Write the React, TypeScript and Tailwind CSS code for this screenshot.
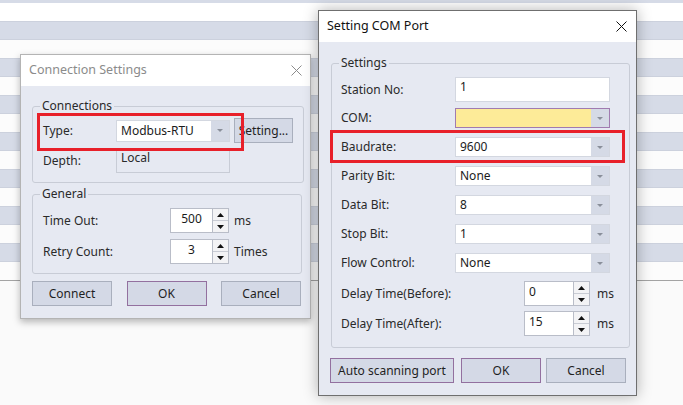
import React from 'react';

const FONT = "font-['Noto_Sans','Liberation_Sans',sans-serif]";

function Arrow({ color = '#8a8f9a', w = 6, h = 3 }: { color?: string; w?: number; h?: number }) {
  return (
    <svg width={w} height={h} viewBox={`0 0 ${w} ${h}`}>
      <path d={`M0 0H${w}L${w / 2} ${h}Z`} fill={color} />
    </svg>
  );
}

function Combo({ value, className, yellow }: { value: string; className: string; yellow?: boolean }) {
  return (
    <div
      className={`flex items-stretch border ${
        yellow ? 'bg-[#fdeb98] border-[#a07bb0]' : 'bg-white border-[#d3d7e0]'
      } ${className}`}
    >
      <div className="flex-1 flex items-center pl-[4px] text-[#1b1b1b]">{value}</div>
      <div className="w-[18px] bg-[#d5dae6] flex items-center justify-center">
        <Arrow />
      </div>
    </div>
  );
}

function Spinner({ value, center, className }: { value: string; center?: boolean; className: string }) {
  return (
    <div className={`flex h-[25px] ${className}`}>
      <div
        className={`flex-1 bg-white border border-[#b9bdc8] flex items-center pb-[3px] text-[#1b1b1b] ${
          center ? 'justify-center' : 'pl-[4px]'
        }`}
      >
        {value}
      </div>
      <div className="w-[16px] flex flex-col border border-l-0 border-[#b9bdc8] bg-[#f3f3f5]">
        <div className="flex-1 flex items-center justify-center border-b border-[#c9ccd4]">
          <svg width="7" height="4" viewBox="0 0 7 4">
            <path d="M0 4H7L3.5 0Z" fill="#111" />
          </svg>
        </div>
        <div className="flex-1 flex items-center justify-center">
          <Arrow color="#111" w={7} h={4} />
        </div>
      </div>
    </div>
  );
}

function Btn({ label, className, purple }: { label: string; className: string; purple?: boolean }) {
  return (
    <div
      className={`h-[25px] flex items-center justify-center bg-[#d4d9e6] border text-[#1f1f1f] ${
        purple ? 'border-[#93709f]' : 'border-[#a9afbd]'
      } ${className}`}
    >
      {label}
    </div>
  );
}

function Group({ title, children, className = '' }: { title: string; children: React.ReactNode; className?: string }) {
  return (
    <fieldset className={`border border-[#c8ccd6] rounded-[3px] ${className}`}>
      <legend className="ml-[7px] px-[2px] leading-[14px] text-[#2a2a2a]">{title}</legend>
      {children}
    </fieldset>
  );
}

function CloseX({ color }: { color: string }) {
  return (
    <svg width="11" height="11" viewBox="0 0 11 11">
      <path d="M0.5 0.5L10.5 10.5M10.5 0.5L0.5 10.5" stroke={color} strokeWidth="1" />
    </svg>
  );
}

export default function App() {
  const stripes = [0, 1, 2, 3, 4, 5, 6];
  const comRows: [string, string][] = [
    ['Baudrate:', '9600'],
    ['Parity Bit:', 'None'],
    ['Data Bit:', '8'],
    ['Stop Bit:', '1'],
    ['Flow Control:', 'None'],
  ];

  return (
    <div className={`relative w-[683px] h-[405px] overflow-hidden bg-[#fafafa] text-[12px] ${FONT}`}>
      {/* background grid */}
      <div className="h-[3px] bg-[#d6dbe7]" />
      <div className="h-[18px] bg-white" />
      {stripes.map((i) => (
        <div key={i}>
          <div className="h-[19px] bg-[#d6dbe7] border-y border-[#ccd1dd]" />
          <div className="h-[18px] bg-[#fcfcfc]" />
        </div>
      ))}
      <div className="h-[1px] bg-[#a3a3a3]" />

      {/* Connection Settings */}
      <div className="absolute left-[20px] top-[54px] w-[291px] h-[265px] bg-[#e6e9f2] border border-[#b4b4b4] shadow-[0_3px_7px_rgba(0,0,0,0.28)] flex flex-col">
        <div className="h-[31px] bg-white flex items-center justify-between pl-[8px] pr-[8px] shrink-0">
          <span className="text-[12.5px] text-[#8b8b8b]">Connection Settings</span>
          <CloseX color="#8b8b8b" />
        </div>
        <div className="pl-[11px] pr-[8px]">
          <Group title="Connections" className="mt-[13px] pb-[9px]">
            <div className="px-[10px]">
              <div className="flex items-center mt-[5px] h-[25px]">
                <span className="w-[73px] text-[#2a2a2a]">Type:</span>
                <Combo value="Modbus-RTU" className="w-[114px] h-[22px]" />
                <Btn label="Setting..." className="ml-[4px] w-[59px]" />
              </div>
              <div className="flex items-center mt-[5px] h-[25px]">
                <span className="w-[73px] text-[#2a2a2a]">Depth:</span>
                <div className="w-[114px] h-[25px] border border-[#c8ccd6] pl-[4px] leading-[18px] text-[#2a2a2a]">
                  Local
                </div>
              </div>
            </div>
          </Group>
          <Group title="General" className="mt-[4px] pb-[9px]">
            <div className="px-[10px]">
              <div className="flex items-center mt-[7px]">
                <span className="w-[127px] text-[#2a2a2a]">Time Out:</span>
                <Spinner value="500" center className="w-[59px]" />
                <span className="ml-[5px] text-[#2a2a2a]">ms</span>
              </div>
              <div className="flex items-center mt-[6px]">
                <span className="w-[127px] text-[#2a2a2a]">Retry Count:</span>
                <Spinner value="3" center className="w-[59px]" />
                <span className="ml-[5px] text-[#2a2a2a]">Times</span>
              </div>
            </div>
          </Group>
          <div className="flex mt-[7px] justify-between pr-[1px]">
            <Btn label="Connect" className="w-[80px]" />
            <Btn label="OK" purple className="w-[80px]" />
            <Btn label="Cancel" className="w-[80px]" />
          </div>
        </div>
      </div>

      {/* Setting COM Port */}
      <div className="absolute left-[318px] top-[10px] w-[319px] h-[386px] bg-[#e6e9f2] border border-[#6f6f6f] shadow-[0_0_14px_rgba(0,0,0,0.3)] flex flex-col">
        <div className="h-[31px] bg-white flex items-center justify-between pl-[8px] pr-[9px] shrink-0">
          <span className="text-[12.5px] text-[#111]">Setting COM Port</span>
          <CloseX color="#111" />
        </div>
        <div className="pl-[12px] pr-[10px]">
          <Group title="Settings" className="mt-[14px] pb-[11px]">
            <div className="pl-[9px] pr-[15px]">
              <div className="flex items-center mt-[7px]">
                <span className="w-[114px] text-[#2a2a2a]">Station No:</span>
                <div className="w-[155px] h-[25px] bg-white border border-[#d3d7e0] pl-[4px] leading-[18px] text-[#1b1b1b]">
                  1
                </div>
              </div>
              <div className="flex items-center mt-[6px]">
                <span className="w-[114px] text-[#2a2a2a]">COM:</span>
                <Combo value="" yellow className="w-[155px] h-[20px]" />
              </div>
              {comRows.map(([label, value]) => (
                <div key={label} className="flex items-center mt-[9px]">
                  <span className="w-[114px] text-[#2a2a2a]">{label}</span>
                  <Combo value={value} className="w-[155px] h-[20px]" />
                </div>
              ))}
              <div className="flex items-center mt-[8px]">
                <span className="w-[183px] text-[#2a2a2a]">Delay Time(Before):</span>
                <Spinner value="0" className="w-[66px]" />
                <span className="ml-[7px] text-[#2a2a2a]">ms</span>
              </div>
              <div className="flex items-center mt-[5px]">
                <span className="w-[183px] text-[#2a2a2a]">Delay Time(After):</span>
                <Spinner value="15" className="w-[66px]" />
                <span className="ml-[7px] text-[#2a2a2a]">ms</span>
              </div>
            </div>
          </Group>
          <div className="flex mt-[10px] -ml-[1px]">
            <Btn label="Auto scanning port" purple className="w-[124px]" />
            <Btn label="OK" purple className="ml-[7px] w-[80px]" />
            <Btn label="Cancel" className="ml-[5px] w-[80px]" />
          </div>
        </div>
      </div>

      {/* highlight boxes */}
      <div className="absolute left-[37px] top-[113px] w-[207px] h-[38px] border-[3px] border-[#e8202a]" />
      <div className="absolute left-[330px] top-[130px] w-[295px] h-[33px] border-[3px] border-[#e8202a]" />
    </div>
  );
}
